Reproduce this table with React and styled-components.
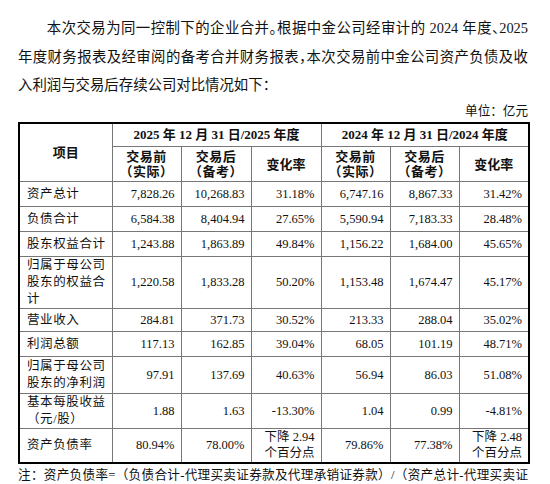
import styled, { createGlobalStyle } from 'styled-components'

const GlobalStyle = createGlobalStyle`
  html, body {
    margin: 0;
    padding: 0;
    background: #fff;
    overflow: hidden;
  }
  body {
    font-family: "Liberation Serif", "Noto Sans CJK SC", serif;
    color: #111;
  }
`

const rows = [
  { name: ['资产总计'], h: 25, values: ['7,828.26', '10,268.83', '31.18%', '6,747.16', '8,867.33', '31.42%'] },
  { name: ['负债合计'], h: 25, values: ['6,584.38', '8,404.94', '27.65%', '5,590.94', '7,183.33', '28.48%'] },
  { name: ['股东权益合计'], h: 25, values: ['1,243.88', '1,863.89', '49.84%', '1,156.22', '1,684.00', '45.65%'] },
  { name: ['归属于母公司', '股东的权益合', '计'], h: 51, values: ['1,220.58', '1,833.28', '50.20%', '1,153.48', '1,674.47', '45.17%'] },
  { name: ['营业收入'], h: 23, values: ['284.81', '371.73', '30.52%', '213.33', '288.04', '35.02%'] },
  { name: ['利润总额'], h: 25, values: ['117.13', '162.85', '39.04%', '68.05', '101.19', '48.71%'] },
  { name: ['归属于母公司', '股东的净利润'], h: 37, values: ['97.91', '137.69', '40.63%', '56.94', '86.03', '51.08%'] },
  { name: ['基本每股收益', '（元/股）'], h: 34, values: ['1.88', '1.63', '-13.30%', '1.04', '0.99', '-4.81%'] },
  { name: ['资产负债率'], h: 34, values: ['80.94%', '78.00%', ['下降 2.94', '个百分点'], '79.86%', '77.38%', ['下降 2.48', '个百分点']] },
]

const widths = [93, 69, 70, 70, 69, 69, 70]

function Lines({ parts }) {
  if (!Array.isArray(parts)) return parts
  return parts.map((p, i) => (
    <span key={i}>
      {i > 0 && <br />}
      {p}
    </span>
  ))
}

export default function App() {
  return (
    <>
      <GlobalStyle />
      <Page>
        <Paragraph>
          <Line $justify $indent>
            本次交易为同一控制下的企业合并<Punct>。</Punct>根据中金公司经审计的 2024 年度<Punct>、</Punct>2025
          </Line>
          <Line $justify>
            年度财务报表及经审阅的备考合并财务报表<Punct>，</Punct>本次交易前中金公司资产负债及收
          </Line>
          <Line>入利润与交易后存续公司对比情况如下：</Line>
        </Paragraph>
        <Unit>单位：亿元</Unit>
        <Table>
          <colgroup>
            {widths.map((w, i) => (
              <col key={i} style={{ width: w }} />
            ))}
          </colgroup>
          <thead>
            <tr style={{ height: 24 }}>
              <Th rowSpan={2}>项目</Th>
              <Th colSpan={3}>2025 年 12 月 31 日/2025 年度</Th>
              <Th colSpan={3}>2024 年 12 月 31 日/2024 年度</Th>
            </tr>
            <tr style={{ height: 35 }}>
              {[0, 1].map((k) => (
                <SubHeads key={k} />
              ))}
            </tr>
          </thead>
          <tbody>
            {rows.map((r) => (
              <tr key={r.name.join('')} style={{ height: r.h }}>
                <NameCell>
                  <Lines parts={r.name} />
                </NameCell>
                {r.values.map((v, i) => (
                  <Td key={i} $multi={Array.isArray(v)}>
                    <Lines parts={v} />
                  </Td>
                ))}
              </tr>
            ))}
          </tbody>
        </Table>
        <Note>注：资产负债率=（负债合计-代理买卖证券款及代理承销证券款）/（资产总计-代理买卖证</Note>
      </Page>
    </>
  )
}

function SubHeads() {
  return (
    <>
      <Th $small>
        交易前
        <br />
        （实际）
      </Th>
      <Th $small>
        交易后
        <br />
        （备考）
      </Th>
      <Th>变化率</Th>
    </>
  )
}

const Page = styled.div`
  width: 510px;
  padding: 14px 22px 0 18px;
`

const Paragraph = styled.div`
  font-size: 14.4px;
  line-height: 28.5px;
`

const Line = styled.div`
  white-space: nowrap;
  text-indent: ${(p) => (p.$indent ? '2em' : '0')};
  text-align: ${(p) => (p.$justify ? 'justify' : 'left')};
  text-align-last: ${(p) => (p.$justify ? 'justify' : 'auto')};
`

const Punct = styled.span`
  display: inline-block;
  width: 0.5em;
  overflow: visible;
  text-indent: 0;
`

const Unit = styled.div`
  font-size: 12.6px;
  line-height: 20px;
  text-align: right;
  margin-top: 1px;
`

const Table = styled.table`
  width: 510px;
  table-layout: fixed;
  border-collapse: collapse;
  border: 2px solid #000;
  margin-top: 1px;
`

const Th = styled.th`
  border: 1px solid #777;
  font-size: 13px;
  line-height: 15px;
  font-weight: bold;
  text-align: center;
  vertical-align: middle;
  padding: 0;
  letter-spacing: ${(p) => (p.$small ? '0.5px' : '0')};
`

const Td = styled.td`
  border: 1px solid #777;
  font-size: 12.5px;
  line-height: ${(p) => (p.$multi ? '16px' : '17px')};
  text-align: right;
  vertical-align: middle;
  padding: 0 6px 0 0;
  white-space: nowrap;
`

const NameCell = styled.td`
  border: 1px solid #777;
  font-size: 12.5px;
  line-height: 17px;
  letter-spacing: 0.6px;
  text-align: left;
  vertical-align: middle;
  padding: 0 0 0 7px;
  white-space: nowrap;
`

const Note = styled.div`
  font-size: 12.6px;
  line-height: 20px;
  margin-top: 1px;
  white-space: nowrap;
  text-align: justify;
  text-align-last: justify;
`
